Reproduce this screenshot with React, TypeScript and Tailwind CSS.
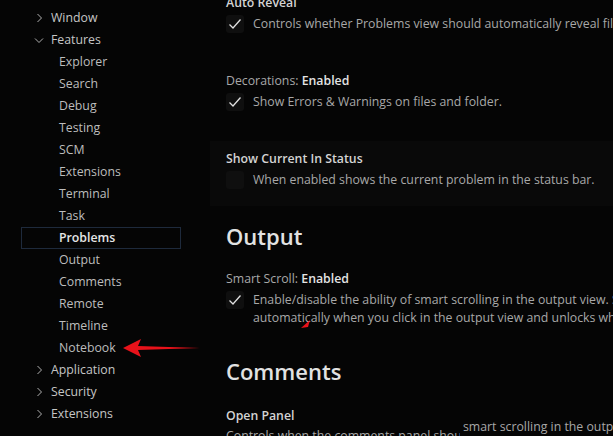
import React from "react";

const font = { fontFamily: '"Open Sans", "Noto Sans", sans-serif' };

function Chevron({ open }: { open?: boolean }) {
  return (
    <svg width="16" height="16" viewBox="0 0 16 16" className="shrink-0">
      {open ? (
        <path d="M4 6.5 L8 10.5 L12 6.5" fill="none" stroke="#b0b0b0" strokeWidth="1" />
      ) : (
        <path d="M6.5 4 L10.5 8 L6.5 12" fill="none" stroke="#b0b0b0" strokeWidth="1" />
      )}
    </svg>
  );
}

function TopItem({ label, open }: { label: string; open?: boolean }) {
  return (
    <div className="h-[22px] flex items-center pl-[31px] gap-[4px] text-[#c5c5c5]">
      <Chevron open={open} />
      <span>{label}</span>
    </div>
  );
}

function Child({ label, selected }: { label: string; selected?: boolean }) {
  if (selected) {
    return (
      <div className="h-[22px] ml-[21px] w-[160px] border border-[#1e2a3c] flex items-center pl-[37px] font-semibold text-[#e6e6e6]">
        {label}
      </div>
    );
  }
  return <div className="h-[22px] flex items-center pl-[59px] text-[#bdbdbd]">{label}</div>;
}

function Check({ checked }: { checked?: boolean }) {
  return (
    <div className="w-[18px] h-[18px] rounded-[3px] bg-[#0f0f0f] flex items-center justify-center shrink-0">
      {checked && (
        <svg width="16" height="16" viewBox="0 0 16 16">
          <path d="M2.5 8.5 L6 12 L13.5 3.5" fill="none" stroke="#e0e0e0" strokeWidth="1.3" />
        </svg>
      )}
    </div>
  );
}

export default function App() {
  const children = [
    "Explorer",
    "Search",
    "Debug",
    "Testing",
    "SCM",
    "Extensions",
    "Terminal",
    "Task",
  ];
  const children2 = ["Output", "Comments", "Remote", "Timeline", "Notebook"];
  return (
    <div
      className="w-[613px] h-[436px] overflow-hidden bg-[#050505] flex text-[12.3px] relative"
      style={font}
    >
      {/* Sidebar */}
      <div className="w-[210px] shrink-0 pt-[7px]">
        <TopItem label="Window" />
        <TopItem label="Features" open />
        {children.map((c) => (
          <Child key={c} label={c} />
        ))}
        <Child label="Problems" selected />
        {children2.map((c) => (
          <Child key={c} label={c} />
        ))}
        <TopItem label="Application" />
        <TopItem label="Security" />
        <TopItem label="Extensions" />
      </div>

      {/* Content */}
      <div className="flex-1 min-w-0 mt-[-15px] whitespace-nowrap">
        {/* Auto Reveal */}
        <div className="h-[78px] pt-[9px] pl-[16px]">
          <div className="h-[18px] leading-[18px] font-semibold text-[#d4d4d4]">Auto Reveal</div>
          <div className="mt-[3px] flex items-center gap-[9px]">
            <Check checked />
            <span className="text-[#a8a8a8]">
              Controls whether Problems view should automatically reveal files when opening them.
            </span>
          </div>
        </div>
        {/* Decorations */}
        <div className="h-[78px] pt-[9px] pl-[16px]">
          <div className="h-[18px] leading-[18px] text-[#a8a8a8]">
            Decorations: <span className="font-semibold text-[#e4e4e4]">Enabled</span>
          </div>
          <div className="mt-[3px] flex items-center gap-[9px]">
            <Check checked />
            <span className="text-[#a8a8a8]">Show Errors &amp; Warnings on files and folder.</span>
          </div>
        </div>
        {/* Show Current In Status */}
        <div className="h-[65px] pt-[9px] pl-[16px] bg-[#090909]">
          <div className="h-[18px] leading-[18px] font-semibold text-[#d4d4d4]">Show Current In Status</div>
          <div className="mt-[3px] flex items-center gap-[9px]">
            <Check />
            <span className="text-[#a8a8a8]">When enabled shows the current problem in the status bar.</span>
          </div>
        </div>
        {/* Output heading */}
        <div className="pl-[16px] mt-[15px] h-[30px] text-[22px] font-semibold leading-[30px] text-[#e2e2e2]">
          Output
        </div>
        {/* Smart Scroll */}
        <div className="mt-[19px] pl-[16px]">
          <div className="h-[18px] leading-[18px] text-[#a8a8a8]">
            Smart Scroll: <span className="font-semibold text-[#e4e4e4]">Enabled</span>
          </div>
          <div className="mt-[3px] flex items-start gap-[9px]">
            <Check checked />
            <div className="text-[#a8a8a8] leading-[18px]">
              <div>Enable/disable the ability of smart scrolling in the output view. Smart scrolling allows you to lock scrolling</div>
              <div>automatically when you click in the output view and unlocks when you click in the last line.</div>
            </div>
          </div>
        </div>
        {/* Comments heading */}
        <div className="pl-[16px] mt-[29px] h-[30px] text-[22px] font-semibold leading-[30px] text-[#e2e2e2]">
          Comments
        </div>
        <div className="pl-[16px] mt-[21px]">
          <div className="h-[18px] leading-[18px] font-semibold text-[#d4d4d4]">Open Panel</div>
          <div className="mt-[2px] h-[18px] leading-[18px] text-[#a8a8a8]">
            Controls when the comments panel should open.
          </div>
        </div>
      </div>

      {/* Tooltip-like overlay fragment */}
      <div className="absolute left-[460px] top-[417px] bg-[#050505] pl-[3px] pr-[20px] h-[22px] leading-[20px] text-[#a8a8a8] whitespace-nowrap">
        smart scrolling in the output view
      </div>

      {/* Red arrow annotation */}
      <svg className="absolute left-[121px] top-[337px]" width="80" height="22" viewBox="0 0 80 22">
        <path d="M2 11 L20 2 L17 9 L79 11 L17 13 L20 20 Z" fill="#e8121a" />
      </svg>
      {/* Small red cursor mark */}
      <svg className="absolute left-[300px] top-[318px]" width="12" height="12" viewBox="0 0 12 12">
        <path d="M1 10 L10 2 L8 9 Z" fill="#e8121a" />
      </svg>
    </div>
  );
}
